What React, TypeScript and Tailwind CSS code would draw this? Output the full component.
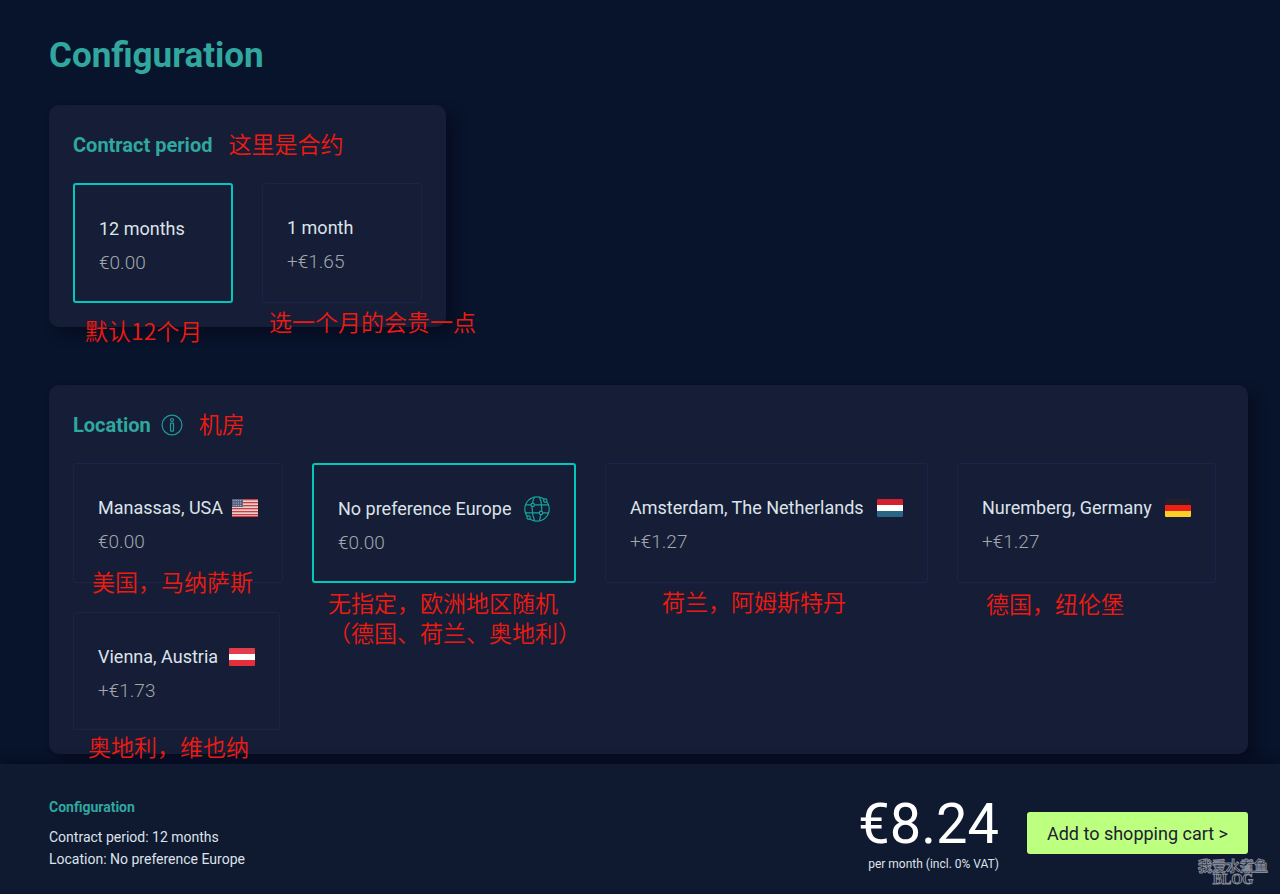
import React, { useState } from 'react'
import clsx from 'clsx'

type Option = {
  id: string;
  name: string;
  extra: number;
  width: string;
  icon?: React.ReactNode;
  note: string;
  notePosition: string;
}

const BASE_PRICE = 8.24;

const UsaFlag: React.FC = () => (
  <svg className="shrink-0" width="26" height="18" viewBox="0 0 26 18" aria-hidden="true">
    <rect width="26" height="18" fill="#e0d3cb" />
    {[0, 3, 6, 9, 12, 15].map((y) => <rect key={y} y={y} width="26" height="1.3" fill="#d23a45" />)}
    <rect y="17" width="26" height="1" fill="#d23a45" />
    <rect width="11" height="8" fill="#56627f" />
    {[1.5, 4, 6.5].map((y) => (
      <path key={y} d={`M1.5 ${y}h9`} stroke="#b9bfca" strokeWidth="1" strokeDasharray="1 1.2" />
    ))}
  </svg>
)

const StripedFlag: React.FC<{ colors: string[] }> = ({ colors }) => (
  <svg className="shrink-0 rounded-[1px]" width="26" height="18" viewBox="0 0 26 18" aria-hidden="true">
    {colors.map((color, i) => <rect key={i} y={i * 6} width="26" height="6" fill={color} />)}
  </svg>
)

const GlobeIcon: React.FC = () => (
  <svg className="shrink-0" width="26" height="26" viewBox="0 0 26 26" fill="none" stroke="#16a39d" strokeWidth="1.2" aria-hidden="true">
    <circle cx="13" cy="13" r="12.2" />
    <path d="M10.5 1C9.2 3.3 8.7 5.3 8.5 7.3M8.1 10.8C8 15.5 8.9 20.7 10.7 24.9M15.5 1C17.4 5.4 18 10.4 17.5 15M16.9 18.4C16.5 21 16 23 15.2 24.9" />
    <path d="M1.6 8.9H7M10.4 8.9H24.4M1.6 16.9H15.3M18.8 16.9H24.4" />
    <circle cx="8.7" cy="8.9" r="1.7" />
    <circle cx="17" cy="16.9" r="1.7" />
    <circle cx="21.3" cy="4.6" r="1.7" fill="#151e36" />
    <circle cx="4.6" cy="21.6" r="1.7" fill="#151e36" />
  </svg>
)

const InfoIcon: React.FC = () => (
  <svg width="22" height="22" viewBox="0 0 22 22" fill="none" stroke="#1c9c9a" strokeWidth="1.2" aria-hidden="true">
    <circle cx="11" cy="11" r="9.9" />
    <circle cx="11" cy="6" r="1.5" />
    <rect x="9.5" y="9.2" width="3" height="8" rx="0.6" />
  </svg>
)

const periods: Option[] = [
  { id: '12m', name: '12 months', extra: 0, width: 'w-40', note: '默认12个月', notePosition: 'left-2.5 mt-3.5' },
  { id: '1m', name: '1 month', extra: 1.65, width: 'w-40', note: '选一个月的会贵一点', notePosition: 'left-1.5 mt-1' },
];

const locations: Option[] = [
  { id: 'us', name: 'Manassas, USA', extra: 0, width: 'w-[210px]', icon: <UsaFlag />, note: '美国，马纳萨斯', notePosition: 'left-[18px] -mt-4' },
  { id: 'eu', name: 'No preference Europe', extra: 0, width: 'w-[264px]', icon: <GlobeIcon />, note: '无指定，欧洲地区随机\n（德国、荷兰、奥地利）', notePosition: 'left-3.5 mt-1.5' },
  { id: 'nl', name: 'Amsterdam, The Netherlands', extra: 1.27, width: 'w-[323px]', icon: <StripedFlag colors={['#d32030', '#ffffff', '#2a6585']} />, note: '荷兰，阿姆斯特丹', notePosition: 'left-14 mt-1' },
  { id: 'de', name: 'Nuremberg, Germany', extra: 1.27, width: 'w-[259px]', icon: <StripedFlag colors={['#251f2c', '#ee2015', '#ffce26']} />, note: '德国，纽伦堡', notePosition: 'left-7 mt-1.5' },
  { id: 'at', name: 'Vienna, Austria', extra: 1.73, width: 'w-[207px]', icon: <StripedFlag colors={['#e23b4a', '#ffffff', '#e32f3c']} />, note: '奥地利，维也纳', notePosition: 'left-3.5 mt-0.5' },
];

const noteStyle = "font-['Noto_Sans_CJK_SC',sans-serif] font-[350] text-[23px] leading-[30px] text-[#f01a10] whitespace-pre";

const OptionCard: React.FC<{ option: Option; group: string; checked: boolean; onSelect: () => void }> = ({ option, group, checked, onSelect }) => {
  return (
    <label
      className={clsx(
        'relative flex flex-col gap-0.5 px-6 pt-7 pb-[22px] rounded-[3px] cursor-pointer',
        option.width,
        checked ? 'border-2 border-[#02c8bc]' : 'border border-[#1b2348]',
      )}
    >
      <input className="sr-only" type="radio" name={group} checked={checked} onChange={onSelect} />
      <span className="flex items-center justify-between h-8 text-[18px] leading-8 text-[#dde3ea] whitespace-nowrap">
        {option.name}
        {option.icon}
      </span>
      <span className="text-[19px] leading-8 font-light text-[#a3a6ad]">
        {option.extra > 0 && '+'}€{option.extra.toFixed(2)}
      </span>
      <span className={clsx('absolute top-full z-10', noteStyle, option.notePosition)}>{option.note}</span>
    </label>
  )
}

const Panel: React.FC<{ title: string; note: string; icon?: React.ReactNode; className?: string; children: React.ReactNode }> = ({ title, note, icon, className, children }) => {
  return (
    <section className={clsx('px-6 pt-6 pb-6 rounded-[10px] bg-[#151e36] shadow-[8px_8px_12px_#070d22]', className)}>
      <div className="flex items-center h-8 mb-[22px]">
        <h2 className="text-[20px] leading-8 font-bold text-[#30a79f]">{title}</h2>
        {icon && <span className="ml-2.5">{icon}</span>}
        <span className={clsx('ml-4 pb-1', noteStyle)}>{note}</span>
      </div>
      <div className="flex flex-wrap gap-[29px]">{children}</div>
    </section>
  )
}

const App: React.FC = () => {
  const [periodId, setPeriodId] = useState('12m');
  const [locationId, setLocationId] = useState('eu');

  const period = periods.find((p) => p.id === periodId)!;
  const location = locations.find((l) => l.id === locationId)!;
  const total = BASE_PRICE + period.extra + location.extra;

  return (
    <div className="flex flex-col min-h-screen bg-[#08142b] font-['Roboto',sans-serif]">
      <main className="flex flex-col grow items-start pl-[49px] pr-8 pt-8 pb-2.5">
        <h1 className="mb-[25px] text-[35px] leading-[48px] font-bold text-[#30a79f]">Configuration</h1>

        <Panel title="Contract period" note="这里是合约" className="mb-[58px]">
          {periods.map((p) => (
            <OptionCard key={p.id} option={p} group="period" checked={p.id === periodId} onSelect={() => setPeriodId(p.id)} />
          ))}
        </Panel>

        <Panel title="Location" note="机房" icon={<InfoIcon />} className="w-full">
          {locations.map((l) => (
            <OptionCard key={l.id} option={l} group="location" checked={l.id === locationId} onSelect={() => setLocationId(l.id)} />
          ))}
        </Panel>
      </main>

      <footer className="relative flex justify-between pl-[49px] pr-8 pt-8 pb-6 bg-[#0f1930] shadow-[0_-4px_8px_#070d22]">
        <div className="text-[14px] leading-[22px] text-[#dde3ea]">
          <h3 className="mb-2 font-bold text-[#30a79f]">Configuration</h3>
          <p>Contract period: {period.name}</p>
          <p>Location: {location.name}</p>
        </div>
        <div className="flex gap-7">
          <div className="flex flex-col items-end">
            <p className="text-[56px] leading-[56px] text-white">€{total.toFixed(2)}</p>
            <p className="mt-0.5 text-[12px] leading-5 text-[#dde3ea]">per month (incl. 0% VAT)</p>
          </div>
          <button type="button" className="h-[42px] mt-4 px-5 rounded-[3px] bg-[#bdff7e] text-[18px] text-[#1c2033] whitespace-nowrap">
            Add to shopping cart &gt;
          </button>
        </div>
        <div className="absolute right-3 bottom-3 flex flex-col items-center font-['Liberation_Serif','Noto_Sans_CJK_SC',serif] font-bold text-[14px] leading-[13px] text-[#0f1930] [-webkit-text-stroke:1px_#868b98]">
          <span>我爱水煮鱼</span>
          <span>BLOG</span>
        </div>
      </footer>
    </div>
  )
}

export default App;
